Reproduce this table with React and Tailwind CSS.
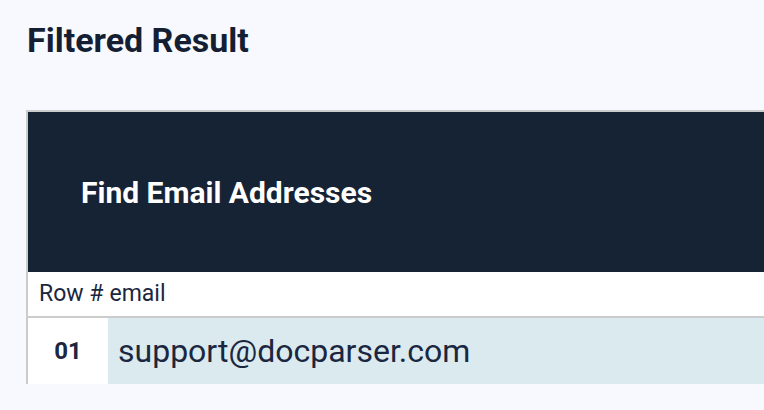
export default function App() {
  return (
    <div className="w-[764px] h-[410px] overflow-hidden bg-[#f8f9fe]" style={{ fontFamily: 'Roboto, "Noto Sans", sans-serif' }}>
      <div className="pl-[26px] pt-[22px]">
        <h1 className="text-[34px] leading-[36px] font-bold text-[#141f33] pl-[1px]">Filtered Result</h1>
        <div className="mt-[52px] w-[800px] border-l-2 border-t-2 border-[#cccccc]">
          <div className="h-[160px] bg-[#162335] flex items-center pl-[53px]">
            <span className="text-[30px] font-bold text-white">Find Email Addresses</span>
          </div>
          <div className="h-[46px] bg-white flex items-center pl-[11px] border-b-2 border-[#cccccc] text-[23px] text-[#1b2740]">
            <span>Row #</span>
            <span className="ml-[6px]">email</span>
          </div>
          <div className="h-[66px] flex">
            <div className="w-[80px] bg-white flex items-center justify-center text-[24px] font-bold text-[#1b2740]">01</div>
            <div className="flex-1 bg-[#daeaee] flex items-center pl-[10px] text-[32px] text-[#1b2740]">support@docparser.com</div>
          </div>
        </div>
      </div>
    </div>
  );
}
